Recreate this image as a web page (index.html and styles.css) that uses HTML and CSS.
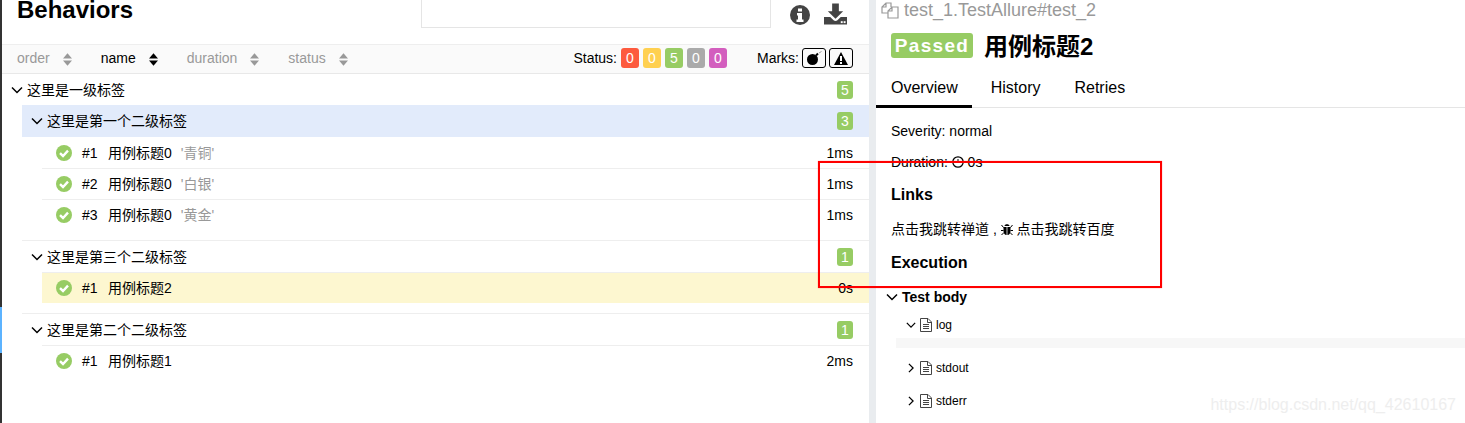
FILE: index.html
```html
<!DOCTYPE html>
<html>
  <head>
    <meta charset="utf-8" />
    <title>Behaviors</title>
    <link rel="stylesheet" href="styles.css">
  </head>
  <body>
    <svg class="icon-defs" width="0" height="0">
      <symbol id="chevron-down" viewBox="0 0 12 12"><path d="M1 3.500 6 8.500 11 3.500" fill="none" stroke="currentColor" stroke-width="1.500"/></symbol>
      <symbol id="chevron-right" viewBox="0 0 12 12"><path d="M3.500 1 8.500 6 3.500 11" fill="none" stroke="currentColor" stroke-width="1.500"/></symbol>
      <symbol id="sort" viewBox="0 0 10 14"><path d="M5 0 10 6H0ZM0 8H10L5 14Z"/></symbol>
      <symbol id="sort-asc" viewBox="0 0 10 14"><path d="M5 0 10 6H0Z" fill="#000"/><path d="M0 8H10L5 14Z" fill="#000"/></symbol>
      <symbol id="check" viewBox="0 0 16 16"><circle cx="8" cy="8" r="8" fill="#97cc64"/><path d="M4 8.200 7 11 12 5.600" fill="none" stroke="#fff" stroke-width="2.400"/></symbol>
      <symbol id="file" viewBox="0 0 12 14"><path d="M.5.5H8L11.500 4V13.500H.5Z" fill="none" stroke="#444"/><path d="M3 6.500H9M3 8.500H9M3 10.500H9" stroke="#444"/><path d="M7.500.5V4.500H11.500" fill="none" stroke="#444"/></symbol>
    </svg>

    <div class="rail">
      <div class="rail-top"></div>
      <div class="rail-active"></div>
      <div class="rail-bottom"></div>
    </div>

    <section class="tree-pane">
      <header class="pane-header">
        <h1>Behaviors</h1>
        <div class="search"></div>
        <div class="tools">
          <svg class="info-icon" viewBox="0 0 20 20"><circle cx="10" cy="10" r="10" fill="#444"/><path d="M8 3.500H12V6.500H8ZM7 8H12V14.500H13.500V17H6.500V14.500H8V10.500H7Z" fill="#fff"/></svg>
          <svg class="download-icon" viewBox="0 0 24 22"><path d="M8.500 0H15.500V8H20L12 16 4 8H8.500Z" fill="#444"/><path d="M0 14H6.500L10 17.500C11 18.500 13 18.500 14 17.500L17.500 14H24V22H0Z" fill="#444"/><rect x="17.500" y="18.500" width="2" height="2" fill="#fff"/><rect x="20.500" y="18.500" width="2" height="2" fill="#fff"/></svg>
        </div>
      </header>

      <div class="toolbar">
        <div class="sorter">order <svg class="sort-icon"><use href="#sort"/></svg></div>
        <div class="sorter sorter-active">name <svg class="sort-icon"><use href="#sort-asc"/></svg></div>
        <div class="sorter">duration <svg class="sort-icon"><use href="#sort"/></svg></div>
        <div class="sorter">status <svg class="sort-icon"><use href="#sort"/></svg></div>
        <div class="status-filter">
          <span>Status:</span>
          <span class="stat broken">0</span>
          <span class="stat warn">0</span>
          <span class="stat ok">5</span>
          <span class="stat skip">0</span>
          <span class="stat unknown">0</span>
        </div>
        <div class="marks-filter">
          <span>Marks:</span>
          <span class="mark">
            <svg viewBox="0 0 16 14" width="16" height="14"><circle cx="6.500" cy="8.500" r="5.500"/><path d="M10 4.500 12 2.500" stroke="#000" stroke-width="2"/><path d="M13 2 15.500 .5" stroke="#999"/></svg>
          </span>
          <span class="mark">
            <svg viewBox="0 0 14 13" width="14" height="13"><path d="M7 0 14 13H0Z"/><rect x="6" y="4" width="2" height="5" fill="#fff"/><rect x="6" y="10" width="2" height="2" fill="#fff"/></svg>
          </span>
        </div>
      </div>

      <div class="tree">
        <div class="row top-row">
          <svg class="chev"><use href="#chevron-down"/></svg>
          <span class="row-name">这里是一级标签</span>
          <span class="count">5</span>
        </div>

        <div class="group">
          <div class="row group-row group-open">
            <svg class="chev"><use href="#chevron-down"/></svg>
            <span class="row-name">这里是第一个二级标签</span>
            <span class="count">3</span>
          </div>
          <div class="leaf">
            <svg class="check"><use href="#check"/></svg>
            <span class="order">#1</span><span class="row-name">用例标题0</span><span class="param">'青铜'</span>
            <span class="time">1ms</span>
          </div>
          <div class="leaf">
            <svg class="check"><use href="#check"/></svg>
            <span class="order">#2</span><span class="row-name">用例标题0</span><span class="param">'白银'</span>
            <span class="time">1ms</span>
          </div>
          <div class="leaf">
            <svg class="check"><use href="#check"/></svg>
            <span class="order">#3</span><span class="row-name">用例标题0</span><span class="param">'黄金'</span>
            <span class="time">1ms</span>
          </div>
        </div>

        <div class="group group-lined">
          <div class="row group-row">
            <svg class="chev"><use href="#chevron-down"/></svg>
            <span class="row-name">这里是第三个二级标签</span>
            <span class="count">1</span>
          </div>
          <div class="leaf leaf-selected">
            <svg class="check"><use href="#check"/></svg>
            <span class="order">#1</span><span class="row-name">用例标题2</span>
            <span class="time">0s</span>
          </div>
        </div>

        <div class="group group-lined">
          <div class="row group-row">
            <svg class="chev"><use href="#chevron-down"/></svg>
            <span class="row-name">这里是第二个二级标签</span>
            <span class="count">1</span>
          </div>
          <div class="leaf">
            <svg class="check"><use href="#check"/></svg>
            <span class="order">#1</span><span class="row-name">用例标题1</span>
            <span class="time">2ms</span>
          </div>
        </div>
      </div>
    </section>

    <div class="splitter"></div>

    <section class="detail-pane">
      <div class="full-name">
        <svg class="copy-icon" viewBox="0 0 18 17"><path d="M7 11H1V5L5 1H10V5M1 5H5V1M11 5H17V16H7V9ZM7 9H11V5" fill="none" stroke="#999" stroke-width="1.200"/></svg>
        <span>test_1.TestAllure#test_2</span>
      </div>
      <div class="title-line">
        <span class="status-tag">Passed</span>
        <h2>用例标题2</h2>
      </div>
      <nav class="tabs">
        <a href="#" class="tab active">Overview</a>
        <a href="#" class="tab">History</a>
        <a href="#" class="tab">Retries</a>
      </nav>
      <div class="overview">
        <p class="severity">Severity: normal</p>
        <p class="duration">Duration:
          <svg class="clock-icon" viewBox="0 0 12 12"><circle cx="6" cy="6" r="5.200" fill="none" stroke="#000" stroke-width="1.300"/><path d="M6 3V6.500H3.500" fill="none" stroke="#000"/></svg>
          0s</p>
        <h3 class="links-title">Links</h3>
        <p class="links">
          <a href="#">点击我跳转禅道</a> ,
          <svg class="bug-icon" viewBox="0 0 12 13"><path d="M3.500 3C3.500 .5 8.500 .5 8.500 3ZM2.500 4H5.600V12C3.500 12 2.500 10 2.500 8ZM6.400 4H9.500V8C9.500 10 8.500 12 6.400 12Z"/><path d="M.5 2 2.500 4.500M11.500 2 9.500 4.500M0 7.500H2.500M12 7.500H9.500M.5 12 3 9.500M11.500 12 9 9.500" stroke="#000"/></svg>
          <a href="#">点击我跳转百度</a>
        </p>
        <h3 class="execution-title">Execution</h3>
        <div class="step-title">
          <svg class="chev"><use href="#chevron-down"/></svg>
          <span>Test body</span>
        </div>
        <div class="attachment attachment-open">
          <svg class="chev-small"><use href="#chevron-down"/></svg>
          <svg class="file-icon"><use href="#file"/></svg>
          <span>log</span>
        </div>
        <div class="attachment-body"></div>
        <div class="attachment">
          <svg class="chev-small"><use href="#chevron-right"/></svg>
          <svg class="file-icon"><use href="#file"/></svg>
          <span>stdout</span>
        </div>
        <div class="attachment">
          <svg class="chev-small"><use href="#chevron-right"/></svg>
          <svg class="file-icon"><use href="#file"/></svg>
          <span>stderr</span>
        </div>
      </div>
    </section>

    <div class="annotation"></div>
    <div class="watermark">https://blog.csdn.net/qq_42610167</div>
  </body>
</html>
```

FILE: styles.css
```css
/* || Initial styles */

html {
  font-family: "Liberation Sans", "Noto Sans CJK SC", sans-serif;
  font-size: 14px;
  color: #000;
}

* {
  box-sizing: border-box;
}

body {
  margin: 0;
  height: 423px;
  overflow: hidden;
  display: flex;
  background-color: #fff;
}

a {
  color: inherit;
  text-decoration: none;
}

.icon-defs {
  position: absolute;
}

/* || Left rail */

.rail {
  width: 2px;
  flex: none;
  display: flex;
  flex-direction: column;
}

.rail-top {
  height: 307px;
  background-color: #333;
}

.rail-active {
  height: 46px;
  background-color: #5cb3ff;
}

.rail-bottom {
  flex: 1;
  background-color: #333;
}

/* || Tree pane */

.tree-pane {
  width: 867px;
  flex: none;
}

.pane-header {
  height: 44px;
  display: flex;
  align-items: flex-start;
}

.pane-header h1 {
  margin: 0 0 0 15px;
  font-size: 24px;
  line-height: 20px;
  font-weight: bold;
}

.search {
  width: 350px;
  height: 28px;
  margin-left: 288px;
  border: 1px solid #e5e5e5;
  border-top: none;
}

.tools {
  display: flex;
  align-items: flex-start;
  margin-left: 19px;
}

.info-icon {
  width: 20px;
  height: 20px;
  margin-top: 5px;
  flex: none;
}

.download-icon {
  width: 23px;
  height: 22px;
  margin: 3px 0 0 14px;
  flex: none;
}

.toolbar {
  height: 30px;
  display: flex;
  align-items: center;
  padding: 0 16px 2px 15px;
  background-color: #fafafa;
  border-top: 1px solid #eee;
  border-bottom: 1px solid #e8e8e8;
}

.sorter {
  display: flex;
  align-items: center;
  gap: 13px;
  margin-right: 29px;
  color: #999;
}

.sorter-active {
  color: #000;
}

.sort-icon {
  width: 9px;
  height: 13px;
  margin-top: 2px;
  fill: #999;
}

.status-filter {
  display: flex;
  align-items: center;
  gap: 4px;
  margin-left: auto;
}

.stat {
  width: 18px;
  height: 20px;
  border-radius: 3px;
  color: #fff;
  line-height: 20px;
  text-align: center;
}

.broken {
  background-color: #fd5a3e;
}

.warn {
  background-color: #ffd050;
}

.ok {
  background-color: #97cc64;
}

.skip {
  background-color: #aaa;
}

.unknown {
  background-color: #d35ebe;
}

.marks-filter {
  display: flex;
  align-items: center;
  gap: 3px;
  margin-left: 30px;
}

.mark {
  width: 24px;
  height: 20px;
  display: flex;
  align-items: center;
  justify-content: center;
  border: 1px solid #000;
  border-radius: 3px;
}

/* || Tree rows */

.row {
  display: flex;
  align-items: center;
  padding-right: 16px;
}

.top-row {
  height: 31px;
  padding-left: 9px;
}

.group {
  margin-left: 20px;
}

.group-lined {
  margin-top: 10px;
  border-top: 1px solid #eee;
}

.group-row {
  height: 31px;
  padding-left: 9px;
}

.group-open {
  height: 32px;
  background-color: #e2ebfb;
}

.row-name {
  padding-bottom: 2px;
}

.chev {
  width: 12px;
  height: 12px;
  margin-right: 4px;
  flex: none;
}

.count {
  width: 16px;
  height: 18px;
  margin-left: auto;
  border-radius: 3px;
  background-color: #97cc64;
  color: #fff;
  line-height: 18px;
  text-align: center;
}

.leaf {
  height: 31px;
  margin-left: 20px;
  display: flex;
  align-items: center;
  padding: 0 16px 0 14px;
  border-top: 1px solid #eee;
}

.group-open + .leaf {
  border-top: none;
}

.leaf-selected {
  background-color: #fdf7d0;
}

.check {
  width: 16px;
  height: 16px;
  margin-right: 10px;
  flex: none;
}

.order {
  width: 26px;
}

.param {
  margin-left: 9px;
  padding-bottom: 2px;
  color: #999;
}

.time {
  margin-left: auto;
}

/* || Splitter */

.splitter {
  width: 7px;
  flex: none;
  background-color: #e9ecef;
}

/* || Detail pane */

.detail-pane {
  flex: 1;
  min-width: 0;
}

.full-name {
  height: 20px;
  display: flex;
  align-items: center;
  gap: 5px;
  padding-left: 5px;
  color: #999;
  font-size: 18px;
}

.copy-icon {
  width: 18px;
  height: 17px;
  flex: none;
}

.title-line {
  height: 39px;
  margin-top: 8px;
  display: flex;
  align-items: flex-start;
  gap: 11px;
  padding-left: 15px;
}

.status-tag {
  width: 82px;
  height: 25px;
  margin-top: 5px;
  border-radius: 3px;
  background-color: #97cc64;
  color: #fff;
  font-size: 19px;
  font-weight: bold;
  letter-spacing: 1.300px;
  line-height: 25px;
  text-align: center;
}

.title-line h2 {
  margin: 0;
  font-size: 24px;
  font-weight: bold;
  line-height: 38px;
}

.tabs {
  height: 41px;
  display: flex;
  border-bottom: 1px solid #e5e5e5;
}

.tab {
  padding: 0 15px;
  margin-right: 4px;
  font-size: 16px;
  line-height: 42px;
}

.tab.active {
  height: 41px;
  padding-right: 14px;
  border-bottom: 3px solid #000;
}

.overview {
  padding-left: 15px;
}

.overview p {
  margin: 0;
  line-height: 20px;
}

.severity {
  padding-top: 13px;
}

.overview .duration {
  margin-top: 11px;
}

.clock-icon {
  width: 12px;
  height: 12px;
  vertical-align: -1px;
}

.overview h3 {
  margin: 0;
  font-size: 16px;
  font-weight: bold;
  line-height: 20px;
}

.links-title {
  padding-top: 13px;
}

.overview .links {
  margin-top: 14px;
}

.bug-icon {
  width: 12px;
  height: 13px;
  vertical-align: -2px;
}

.overview .execution-title {
  margin-top: 14px;
}

.step-title {
  height: 20px;
  margin: 14px 0 0 -5px;
  display: flex;
  align-items: center;
  font-weight: bold;
}

.attachment {
  height: 20px;
  margin-top: 8px;
  display: flex;
  align-items: center;
  font-size: 12px;
  padding-left: 15px;
}

.chev-small {
  width: 10px;
  height: 10px;
  margin-right: 4px;
  flex: none;
}

.file-icon {
  width: 12px;
  height: 14px;
  margin-right: 4px;
  flex: none;
}

.attachment-body {
  height: 10px;
  margin: 3px 0 0 5px;
  background-color: #f7f7f7;
}

.attachment-body + .attachment {
  margin-top: 10px;
}

.attachment + .attachment {
  margin-top: 13px;
}

/* || Overlays from the screenshot */

.annotation {
  position: absolute;
  left: 818px;
  top: 161px;
  width: 344px;
  height: 127px;
  border: 2px solid #f00;
  box-shadow: 0 0 1px rgba(255, 0, 0, 0.5);
}

.watermark {
  position: absolute;
  right: 9px;
  top: 396px;
  color: #eee;
  font-size: 16px;
}
```
